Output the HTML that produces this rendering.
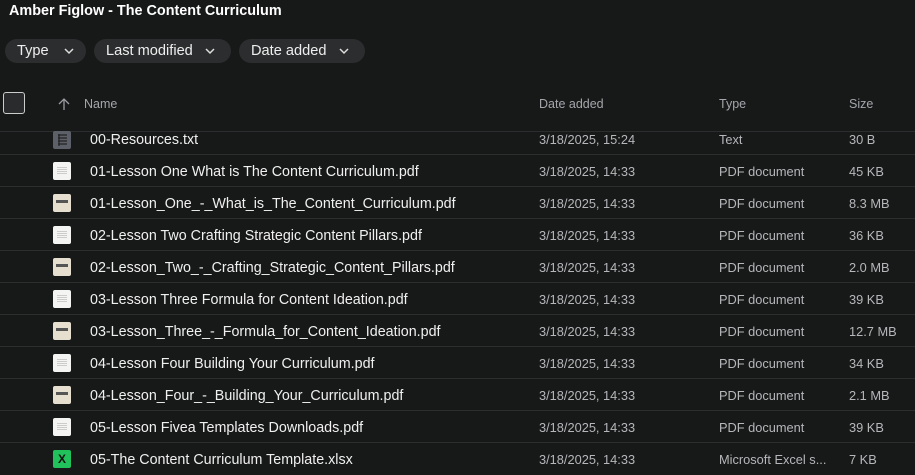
<!DOCTYPE html>
<html><head><style>
body{margin:0;width:915px;height:473px;background:#171818;font-family:"Liberation Sans",sans-serif;color:#e8e8e8;overflow:hidden;position:relative}
.t{position:absolute;left:9px;top:3px;font-size:14.4px;font-weight:bold;color:#fff}
.chip{position:absolute;top:39px;height:24px;border-radius:12px;background:#2c2d2e;font-size:14.6px;color:#eee;line-height:25px;padding-left:12px;box-sizing:border-box}
.chip svg{position:absolute;top:8px}
.hd{position:absolute;top:97px;font-size:12.5px;color:#a3a6ab}
.cb{position:absolute;left:3px;top:92px;width:20px;height:20px;border:1px solid #ccc;border-radius:3px;background:#2a2b2c}
.line{position:absolute;left:0;width:915px;height:1px;background:#2c2d2e}
.row{position:absolute;left:0;width:915px;height:32px;font-size:14.3px}
.row span{position:absolute;top:9px;white-space:nowrap}
.n{left:90px;color:#f0f0f0}
.d{left:539px;font-size:12.8px;color:#b5b7ba}
.ty{left:719px;font-size:12.8px;color:#b5b7ba}
.s{left:849px;font-size:12.8px;color:#b5b7ba}
.ic{position:absolute;left:53px;top:7px;width:18px;height:18px;border-radius:2px}
.w{background:#f4f4f2}
.b{background:#e6dfd0}
.b::after{content:"";position:absolute;left:3px;top:6px;width:12px;height:3px;background:#555}
.w::after{content:"";position:absolute;left:4px;top:5px;width:10px;height:8px;background:repeating-linear-gradient(#ccc 0 1px,transparent 1px 2px)}
</style></head><body>
<div class="t">Amber Figlow - The Content Curriculum</div>
<div class="chip" style="left:5px;width:81px">Type<svg style="left:59px" width="10" height="8"><path d="M1 2l4 4 4-4" stroke="#ddd" fill="none" stroke-width="1.5"/></svg></div>
<div class="chip" style="left:94px;width:137px">Last modified<svg style="left:111px" width="10" height="8"><path d="M1 2l4 4 4-4" stroke="#ddd" fill="none" stroke-width="1.5"/></svg></div>
<div class="chip" style="left:239px;width:126px">Date added<svg style="left:100px" width="10" height="8"><path d="M1 2l4 4 4-4" stroke="#ddd" fill="none" stroke-width="1.5"/></svg></div>
<div class="cb"></div>
<svg style="position:absolute;left:58px;top:97px" width="12" height="14"><path d="M6 13V2M1 7l5-5 5 5" stroke="#9a9da2" fill="none" stroke-width="1.3"/></svg>
<div class="hd" style="left:84px">Name</div>
<div class="hd" style="left:539px">Date added</div>
<div class="hd" style="left:719px">Type</div>
<div class="hd" style="left:849px">Size</div>
<div class="line" style="top:131px"></div>
<div class="row" style="top:123px"><div class="ic" style="background:#5d6068;top:8px"><svg width="18" height="18"><path d="M5 4h9M5 7h9M5 10h9M5 13h9M6 3v12" stroke="#222" stroke-width="1.2"/></svg></div><span class="n">00-Resources.txt</span><span class="d">3/18/2025, 15:24</span><span class="ty">Text</span><span class="s">30 B</span></div>
<div class="line" style="top:154px"></div>
<div class="row" style="top:155px"><div class="ic w"></div><span class="n">01-Lesson One What is The Content Curriculum.pdf</span><span class="d">3/18/2025, 14:33</span><span class="ty">PDF document</span><span class="s">45 KB</span></div>
<div class="line" style="top:186px"></div>
<div class="row" style="top:187px"><div class="ic b"></div><span class="n">01-Lesson_One_-_What_is_The_Content_Curriculum.pdf</span><span class="d">3/18/2025, 14:33</span><span class="ty">PDF document</span><span class="s">8.3 MB</span></div>
<div class="line" style="top:218px"></div>
<div class="row" style="top:219px"><div class="ic w"></div><span class="n">02-Lesson Two Crafting Strategic Content Pillars.pdf</span><span class="d">3/18/2025, 14:33</span><span class="ty">PDF document</span><span class="s">36 KB</span></div>
<div class="line" style="top:250px"></div>
<div class="row" style="top:251px"><div class="ic b"></div><span class="n">02-Lesson_Two_-_Crafting_Strategic_Content_Pillars.pdf</span><span class="d">3/18/2025, 14:33</span><span class="ty">PDF document</span><span class="s">2.0 MB</span></div>
<div class="line" style="top:282px"></div>
<div class="row" style="top:283px"><div class="ic w"></div><span class="n">03-Lesson Three Formula for Content Ideation.pdf</span><span class="d">3/18/2025, 14:33</span><span class="ty">PDF document</span><span class="s">39 KB</span></div>
<div class="line" style="top:314px"></div>
<div class="row" style="top:315px"><div class="ic b"></div><span class="n">03-Lesson_Three_-_Formula_for_Content_Ideation.pdf</span><span class="d">3/18/2025, 14:33</span><span class="ty">PDF document</span><span class="s">12.7 MB</span></div>
<div class="line" style="top:346px"></div>
<div class="row" style="top:347px"><div class="ic w"></div><span class="n">04-Lesson Four Building Your Curriculum.pdf</span><span class="d">3/18/2025, 14:33</span><span class="ty">PDF document</span><span class="s">34 KB</span></div>
<div class="line" style="top:378px"></div>
<div class="row" style="top:379px"><div class="ic b"></div><span class="n">04-Lesson_Four_-_Building_Your_Curriculum.pdf</span><span class="d">3/18/2025, 14:33</span><span class="ty">PDF document</span><span class="s">2.1 MB</span></div>
<div class="line" style="top:410px"></div>
<div class="row" style="top:411px"><div class="ic w"></div><span class="n">05-Lesson Fivea Templates Downloads.pdf</span><span class="d">3/18/2025, 14:33</span><span class="ty">PDF document</span><span class="s">39 KB</span></div>
<div class="line" style="top:442px"></div>
<div class="row" style="top:443px"><div class="ic" style="background:#21c15c;color:#111;font-size:12px;font-weight:bold;text-align:center;line-height:18px">X</div><span class="n">05-The Content Curriculum Template.xlsx</span><span class="d">3/18/2025, 14:33</span><span class="ty">Microsoft Excel s...</span><span class="s">7 KB</span></div>
</body></html>
